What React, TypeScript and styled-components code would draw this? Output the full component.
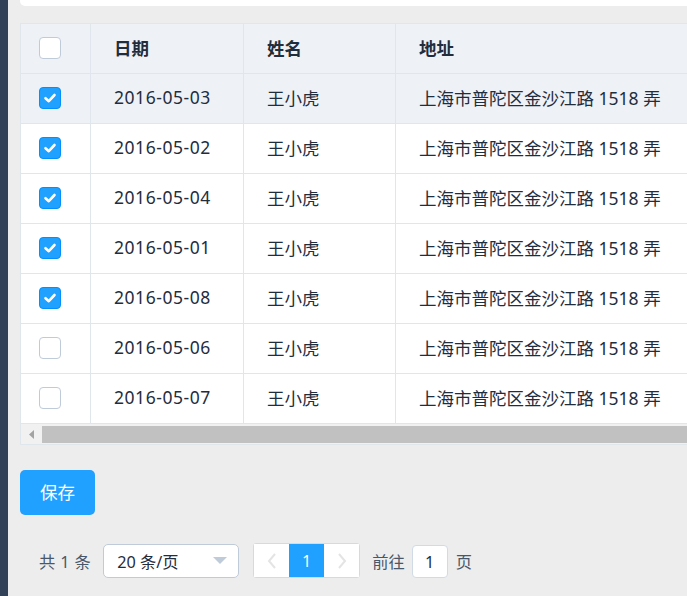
import React from "react";
import styled, { createGlobalStyle } from "styled-components";

const GlobalStyle = createGlobalStyle`
  html, body { margin: 0; padding: 0; }
  body {
    background: #ededed;
    font-family: "Noto Sans", "Noto Sans CJK SC", sans-serif;
    overflow: hidden;
    width: 687px;
    height: 596px;
  }
`;

const Layout = styled.div`
  display: flex;
  height: 596px;
  width: 687px;
  overflow: hidden;
`;

const Sidebar = styled.div`
  flex: 0 0 8px;
  background: #324157;
`;

const Main = styled.div`
  flex: 1;
  padding-left: 12px;
  display: flex;
  flex-direction: column;
  min-width: 0;
`;

const TopCard = styled.div`
  height: 6px;
  width: 720px;
  background: #fff;
  border-radius: 0 0 5px 5px;
`;

const TableWrap = styled.div`
  margin-top: 17px;
  width: 760px;
  border: 1px solid #dfe6ec;
  border-right: none;
  background: #fff;
  box-sizing: border-box;
`;

const Row = styled.div<{ $head?: boolean; $hover?: boolean }>`
  display: grid;
  grid-template-columns: 70px 153px 152px 1fr;
  height: 50px;
  box-sizing: border-box;
  border-bottom: 1px solid #dfe6ec;
  background: ${(p) => (p.$head || p.$hover ? "#eef1f6" : "#fff")};
  font-weight: ${(p) => (p.$head ? 700 : 400)};
  color: #1f2d3d;
  font-size: 17.5px;
`;

const Cell = styled.div<{ $last?: boolean }>`
  display: flex;
  align-items: center;
  padding: 0 0 3px 23px;
  box-sizing: border-box;
  border-right: ${(p) => (p.$last ? "none" : "1px solid #dfe6ec")};
  white-space: nowrap;
  overflow: hidden;
`;

const DateText = styled.span`
  letter-spacing: 0.55px;
`;

const CheckCell = styled(Cell)`
  padding: 0 0 1px 18px;
`;

const Box = styled.span<{ $checked?: boolean }>`
  width: 22px;
  height: 22px;
  box-sizing: border-box;
  border-radius: 4px;
  border: 1px solid ${(p) => (p.$checked ? "#0190fe" : "#bfcbd9")};
  background: ${(p) => (p.$checked ? "#20a0ff" : "#fff")};
  display: flex;
  align-items: center;
  justify-content: center;
`;

const ScrollTrack = styled.div`
  height: 20px;
  background: #f1f1f1;
  display: flex;
  align-items: center;
`;

const ScrollArrow = styled.div`
  width: 21px;
  display: flex;
  justify-content: center;
  align-items: center;
`;

const ScrollThumb = styled.div`
  flex: 1;
  height: 17px;
  background: #c1c1c1;
`;

const SaveButton = styled.button`
  margin-top: 25px;
  width: 75px;
  height: 45px;
  border: none;
  border-radius: 5px;
  background: #20a0ff;
  color: #fff;
  font-family: inherit;
  font-size: 17.5px;
  padding: 0 0 2px;
  align-self: flex-start;
`;

const Pagination = styled.div`
  margin-top: 28px;
  display: flex;
  align-items: center;
  padding-left: 19px;
  font-size: 16.25px;
  color: #48576a;
`;

const Total = styled.span`
  margin-right: 12px;
  white-space: pre;
  letter-spacing: 0.4px;
`;

const Select = styled.div`
  width: 136px;
  height: 34px;
  box-sizing: border-box;
  border: 1px solid #bfcbd9;
  border-radius: 5px;
  background: #fff;
  display: flex;
  align-items: center;
  justify-content: space-between;
  padding: 0 11px 0 13px;
  color: #1f2d3d;
  margin-right: 14px;
`;

const Pager = styled.div`
  display: flex;
  height: 35px;
  box-sizing: border-box;
  border: 1px solid #d1dbe5;
  border-radius: 3px;
  background: #fff;
  margin-right: 12px;
`;

const PageItem = styled.div<{ $active?: boolean }>`
  width: 35px;
  display: flex;
  align-items: center;
  justify-content: center;
  background: ${(p) => (p.$active ? "#20a0ff" : "#fff")};
  color: ${(p) => (p.$active ? "#fff" : "#1f2d3d")};
`;

const Jump = styled.span`
  margin-right: 7px;
`;

const JumpInput = styled.div`
  width: 36px;
  height: 33px;
  box-sizing: border-box;
  border: 1px solid #d1dbe5;
  border-radius: 4px;
  background: #fff;
  color: #1f2d3d;
  display: flex;
  align-items: center;
  justify-content: center;
  margin-right: 8px;
  margin-top: 2px;
`;

const rows = [
  { date: "2016-05-03", checked: true, hover: true },
  { date: "2016-05-02", checked: true },
  { date: "2016-05-04", checked: true },
  { date: "2016-05-01", checked: true },
  { date: "2016-05-08", checked: true },
  { date: "2016-05-06", checked: false },
  { date: "2016-05-07", checked: false },
];

const Check = ({ checked }: { checked?: boolean }) => (
  <Box $checked={checked}>
    {checked && (
      <svg width="16" height="16" viewBox="0 0 16 16">
        <polyline points="3.5,8.2 6.8,11.2 12.5,5" fill="none" stroke="#fff" strokeWidth="2.6" strokeLinecap="round" strokeLinejoin="round" />
      </svg>
    )}
  </Box>
);

const Chevron = ({ dir }: { dir: "left" | "right" }) => (
  <svg width="10" height="18" viewBox="0 0 10 18">
    <polyline
      points={dir === "left" ? "8,2 2,9 8,16" : "2,2 8,9 2,16"}
      fill="none"
      stroke="#e4e4e4"
      strokeWidth="2"
    />
  </svg>
);

export default function App() {
  return (
    <>
      <GlobalStyle />
      <Layout>
        <Sidebar />
        <Main>
          <TopCard />
          <TableWrap>
            <Row $head>
              <CheckCell>
                <Check />
              </CheckCell>
              <Cell>日期</Cell>
              <Cell>姓名</Cell>
              <Cell $last>地址</Cell>
            </Row>
            {rows.map((r) => (
              <Row key={r.date} $hover={r.hover}>
                <CheckCell>
                  <Check checked={r.checked} />
                </CheckCell>
                <Cell>
                  <DateText>{r.date}</DateText>
                </Cell>
                <Cell>王小虎</Cell>
                <Cell $last>上海市普陀区金沙江路 1518 弄</Cell>
              </Row>
            ))}
            <ScrollTrack>
              <ScrollArrow>
                <svg width="6" height="9" viewBox="0 0 6 9">
                  <polygon points="5,0 5,9 0,4.5" fill="#a3a3a3" />
                </svg>
              </ScrollArrow>
              <ScrollThumb />
            </ScrollTrack>
          </TableWrap>
          <SaveButton>保存</SaveButton>
          <Pagination>
            <Total>共 1 条</Total>
            <Select>
              <span>20 条/页</span>
              <svg width="14" height="7" viewBox="0 0 14 7">
                <polygon points="0,0 14,0 7,7" fill="#bfcbd9" />
              </svg>
            </Select>
            <Pager>
              <PageItem>
                <Chevron dir="left" />
              </PageItem>
              <PageItem $active>1</PageItem>
              <PageItem>
                <Chevron dir="right" />
              </PageItem>
            </Pager>
            <Jump>前往</Jump>
            <JumpInput>1</JumpInput>
            <span>页</span>
          </Pagination>
        </Main>
      </Layout>
    </>
  );
}
